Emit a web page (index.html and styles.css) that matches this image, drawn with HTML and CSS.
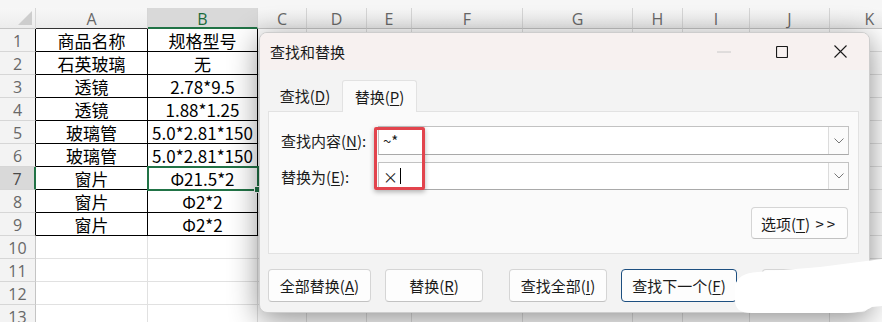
FILE: index.html
```html
<!DOCTYPE html>
<html lang="zh-CN">
	<head>
		<meta charset="UTF-8" />
		<title>查找和替换</title>
		<link rel="stylesheet" href="styles.css">
	</head>
	<body>
		<div class="sheet">
			<div class="grid">
				<div class="ch corner"></div>
				<div class="ch dk">A</div><div class="ch sel">B</div><div class="ch">C</div><div class="ch">D</div><div class="ch">E</div><div class="ch">F</div><div class="ch">G</div><div class="ch">H</div><div class="ch">I</div><div class="ch">J</div><div class="ch">K</div>

				<div class="rh dk">1</div><div class="c b">商品名称</div><div class="c b">规格型号</div><div class="c"></div><div class="c"></div><div class="c"></div><div class="c"></div><div class="c"></div><div class="c"></div><div class="c"></div><div class="c"></div><div class="c"></div>
				<div class="rh dk">2</div><div class="c b">石英玻璃</div><div class="c b">无</div><div class="c"></div><div class="c"></div><div class="c"></div><div class="c"></div><div class="c"></div><div class="c"></div><div class="c"></div><div class="c"></div><div class="c"></div>
				<div class="rh dk">3</div><div class="c b">透镜</div><div class="c b">2.78*9.5</div><div class="c"></div><div class="c"></div><div class="c"></div><div class="c"></div><div class="c"></div><div class="c"></div><div class="c"></div><div class="c"></div><div class="c"></div>
				<div class="rh dk">4</div><div class="c b">透镜</div><div class="c b">1.88*1.25</div><div class="c"></div><div class="c"></div><div class="c"></div><div class="c"></div><div class="c"></div><div class="c"></div><div class="c"></div><div class="c"></div><div class="c"></div>
				<div class="rh dk">5</div><div class="c b">玻璃管</div><div class="c b">5.0*2.81*150</div><div class="c"></div><div class="c"></div><div class="c"></div><div class="c"></div><div class="c"></div><div class="c"></div><div class="c"></div><div class="c"></div><div class="c"></div>
				<div class="rh dk">6</div><div class="c b">玻璃管</div><div class="c b">5.0*2.81*150</div><div class="c"></div><div class="c"></div><div class="c"></div><div class="c"></div><div class="c"></div><div class="c"></div><div class="c"></div><div class="c"></div><div class="c"></div>
				<div class="rh sel">7</div><div class="c b">窗片</div><div class="c b cur">Φ21.5*2</div><div class="c"></div><div class="c"></div><div class="c"></div><div class="c"></div><div class="c"></div><div class="c"></div><div class="c"></div><div class="c"></div><div class="c"></div>
				<div class="rh dk">8</div><div class="c b">窗片</div><div class="c b">Φ2*2</div><div class="c"></div><div class="c"></div><div class="c"></div><div class="c"></div><div class="c"></div><div class="c"></div><div class="c"></div><div class="c"></div><div class="c"></div>
				<div class="rh dk">9</div><div class="c b">窗片</div><div class="c b">Φ2*2</div><div class="c"></div><div class="c"></div><div class="c"></div><div class="c"></div><div class="c"></div><div class="c"></div><div class="c"></div><div class="c"></div><div class="c"></div>
				<div class="rh">10</div><div class="c"></div><div class="c"></div><div class="c"></div><div class="c"></div><div class="c"></div><div class="c"></div><div class="c"></div><div class="c"></div><div class="c"></div><div class="c"></div><div class="c"></div>
				<div class="rh">11</div><div class="c"></div><div class="c"></div><div class="c"></div><div class="c"></div><div class="c"></div><div class="c"></div><div class="c"></div><div class="c"></div><div class="c"></div><div class="c"></div><div class="c"></div>
				<div class="rh">12</div><div class="c"></div><div class="c"></div><div class="c"></div><div class="c"></div><div class="c"></div><div class="c"></div><div class="c"></div><div class="c"></div><div class="c"></div><div class="c"></div><div class="c"></div>
				<div class="rh">13</div><div class="c"></div><div class="c"></div><div class="c"></div><div class="c"></div><div class="c"></div><div class="c"></div><div class="c"></div><div class="c"></div><div class="c"></div><div class="c"></div><div class="c"></div>
			</div>
		</div>

		<div class="dialog">
			<div class="titlebar">
				<span class="title">查找和替换</span>
				<div class="winctl">
					<span class="wbtn">
						<svg width="14" height="2" viewBox="0 0 14 2"><line x1="0" y1="1" x2="14" y2="1" stroke="#c8c8c8" stroke-width="1"/></svg>
					</span>
					<span class="wbtn">
						<svg width="12" height="12" viewBox="0 0 12 12"><rect x="0.5" y="0.5" width="11" height="11" rx="1" fill="none" stroke="#1a1a1a" stroke-width="1.2"/></svg>
					</span>
					<span class="wbtn">
						<svg width="13" height="13" viewBox="0 0 13 13"><path d="M0.5 0.5 L12.5 12.5 M12.5 0.5 L0.5 12.5" stroke="#1a1a1a" stroke-width="1.1"/></svg>
					</span>
				</div>
			</div>

			<div class="tabs">
				<span class="tab">查找(<u>D</u>)</span>
				<span class="tab active">替换(<u>P</u>)</span>
			</div>

			<div class="panel">
				<div class="field">
					<label>查找内容(<u>N</u>):</label>
					<div class="combo">
						<span class="val">~*</span>
						<span class="drop"><svg width="10" height="6" viewBox="0 0 10 6"><path d="M0.5 0.5 L5 5 L9.5 0.5" fill="none" stroke="#777" stroke-width="1"/></svg></span>
					</div>
				</div>
				<div class="field">
					<label>替换为(<u>E</u>):</label>
					<div class="combo short">
						<span class="val">×<i class="caret"></i></span>
						<span class="drop"><svg width="10" height="6" viewBox="0 0 10 6"><path d="M0.5 0.5 L5 5 L9.5 0.5" fill="none" stroke="#777" stroke-width="1"/></svg></span>
					</div>
				</div>
				<div class="opts">
					<button class="btn options">选项(<u>T</u>) <span class="gt">&gt;&gt;</span></button>
				</div>
			</div>

			<div class="actions">
				<button class="btn all">全部替换(<u>A</u>)</button>
				<button class="btn one">替换(<u>R</u>)</button>
				<button class="btn find-all">查找全部(<u>I</u>)</button>
				<button class="btn next">查找下一个(<u>F</u>)</button>
				<button class="btn close">关闭</button>
			</div>
		</div>

		<div class="mark"></div>

		<svg class="blob" width="150" height="60" viewBox="733 257 150 60">
			<path d="M735 286 C737 277 744 273 758 272 L820 267 L882 259 L882 306 L872 307 C866 311 856 313 842 313 L752 313 C740 313 735 309 735 300 Z" fill="#ffffff"/>
		</svg>
	</body>
</html>
```

FILE: styles.css
```css
:root {
	--grid-line: #e1e1e1;
	--head-bg: #f3f3f3;
	--head-line: #d6d6d6;
	--excel-green: #217346;
	--dlg-bg: #f3f3f3;
	--panel-bg: #fafafa;
	--panel-line: #e2e2e2;
	--text: #1a1a1a;
	--cjk: "Noto Sans CJK SC", sans-serif;
}

body {
	margin: 0;
	width: 882px;
	height: 322px;
	overflow: hidden;
	position: relative;
	background: #ffffff;
	font-family: var(--cjk);
	color: #000;
}

/* Лист */
.sheet {
	padding-top: 8px;
	background: #f6f6f6;
}

.grid {
	display: grid;
	grid-template-columns: 36px 112px 110px 49px 60px 45px 111px 110px 50px 67px 80px 80px;
	grid-template-rows: 21px repeat(13, 23px);
	background: #fff;
}

.grid > div {
	box-sizing: border-box;
	border-right: 1px solid var(--grid-line);
	border-bottom: 1px solid var(--grid-line);
	display: flex;
	align-items: center;
	justify-content: center;
	font-size: 17px;
	line-height: 1;
	white-space: nowrap;
}

.grid > .ch,
.grid > .rh {
	background: var(--head-bg);
	color: #686868;
	font-family: "Open Sans", sans-serif;
	font-size: 16px;
	border-right-color: var(--head-line);
	border-bottom-color: var(--head-line);
}
.grid > .ch {
	border-bottom-color: #c4c4c4;
	padding-top: 2px;
	background: linear-gradient(#f7f7f7, #ececec);
}
.grid > .rh {
	border-right-color: #c4c4c4;
	padding-top: 2px;
}

.grid > .corner {
	position: relative;
}
.grid > .corner::after {
	content: "";
	position: absolute;
	right: 3px;
	bottom: 3px;
	width: 14px;
	height: 14px;
	background: #cdcdcd;
	clip-path: polygon(100% 0, 100% 100%, 0 100%);
}

.grid > .ch.dk {
	border-bottom-color: #333;
}
.grid > .rh.dk {
	border-right-color: #000;
}
.grid > .ch.sel {
	background: #d9d9d9;
	color: #1b6b3b;
	border-bottom: 2px solid var(--excel-green);
}
.grid > .rh.sel {
	background: #d9d9d9;
	color: #4a4a4a;
	border-right: 2px solid var(--excel-green);
}

.grid > .b {
	border-right-color: #000;
	border-bottom-color: #000;
}

.grid > .cur {
	position: relative;
	outline: 2px solid var(--excel-green);
	outline-offset: -1px;
}
.grid > .cur::after {
	content: "";
	position: absolute;
	right: -4px;
	bottom: -4px;
	width: 5px;
	height: 5px;
	background: var(--excel-green);
	border: 1px solid #fff;
}

/* Диалог */
.dialog {
	position: absolute;
	left: 259px;
	top: 32px;
	width: 611px;
	height: 281px;
	box-sizing: border-box;
	border: 1px solid #cdcdcd;
	border-radius: 8px;
	background: var(--dlg-bg);
	box-shadow: 0 6px 30px rgba(0, 0, 0, 0.45);
	overflow: hidden;
	z-index: 2;
	font-size: 15px;
	color: var(--text);
}

.dialog u {
	text-decoration-thickness: 1px;
	text-underline-offset: 2px;
}

.titlebar {
	height: 37px;
	background: #f7f1f0;
	display: flex;
	justify-content: space-between;
}
.title {
	padding-left: 10px;
	align-self: center;
	line-height: 1;
}
.winctl {
	display: flex;
}
.wbtn {
	width: 58px;
	display: flex;
	align-items: center;
	justify-content: center;
}

.tabs {
	display: flex;
	align-items: flex-start;
	height: 31px;
	margin: 10px 0 0 8px;
	position: relative;
	z-index: 1;
}
.tab {
	box-sizing: border-box;
	width: 74px;
	height: 31px;
	display: flex;
	align-items: center;
	justify-content: center;
	line-height: 1;
}
.tab.active {
	width: 75px;
	height: 32px;
	background: var(--panel-bg);
	border: 1px solid var(--panel-line);
	border-bottom: none;
	border-radius: 3px 3px 0 0;
}

.panel {
	box-sizing: border-box;
	margin-left: 8px;
	width: 591px;
	height: 143px;
	border: 1px solid var(--panel-line);
	background: var(--panel-bg);
	padding: 14px 9px 0 12px;
}

.field {
	display: flex;
	align-items: center;
}
.field + .field {
	margin-top: 7px;
}
.field label {
	width: 97px;
	line-height: 1;
}

.combo {
	flex: 1;
	height: 29px;
	box-sizing: border-box;
	border: 1px solid #c2c2c2;
	border-bottom-color: #a9a9a9;
	background: #fff;
	display: flex;
	justify-content: space-between;
}
.combo.short {
	height: 28px;
}
.combo .val {
	padding-left: 4px;
	display: flex;
	align-items: center;
	font-size: 15px;
	line-height: 1;
}
.caret {
	display: inline-block;
	width: 1px;
	height: 16px;
	background: #000;
	margin-left: 2px;
}
.drop {
	width: 20px;
	box-sizing: border-box;
	border-left: 1px solid #dcdcdc;
	background: #fbfbfb;
	display: flex;
	align-items: center;
	justify-content: center;
}

.opts {
	display: flex;
	justify-content: flex-end;
	margin-top: 17px;
	padding-right: 1px;
}

.btn {
	box-sizing: border-box;
	height: 33px;
	padding: 0;
	border: 1px solid #d5d5d5;
	border-bottom-color: #c2c2c2;
	border-radius: 4px;
	background: #fdfdfd;
	font-family: var(--cjk);
	font-size: 15px;
	color: var(--text);
	line-height: 1;
}
.btn.options {
	width: 97px;
	height: 32px;
}
.btn .gt {
	letter-spacing: 3px;
	margin-left: 2px;
}

.actions {
	display: flex;
	margin: 15px 0 0 8px;
}
.btn.all { width: 103px; }
.btn.one { width: 98px; margin-left: 14px; }
.btn.find-all { width: 98px; margin-left: 26px; }
.btn.next {
	width: 116px;
	margin-left: 14px;
	border: 1px solid #1d4f80;
}
.btn.close { width: 98px; margin-left: 25px; }

/* Красная рамка поверх полей */
.mark {
	position: absolute;
	left: 374px;
	top: 127px;
	width: 51px;
	height: 63px;
	box-sizing: border-box;
	border: 3px solid #e2444d;
	border-radius: 2px;
	box-shadow: 0 2px 5px rgba(0, 0, 0, 0.3);
	z-index: 3;
}

.blob {
	position: absolute;
	left: 733px;
	top: 257px;
	z-index: 4;
}
```
